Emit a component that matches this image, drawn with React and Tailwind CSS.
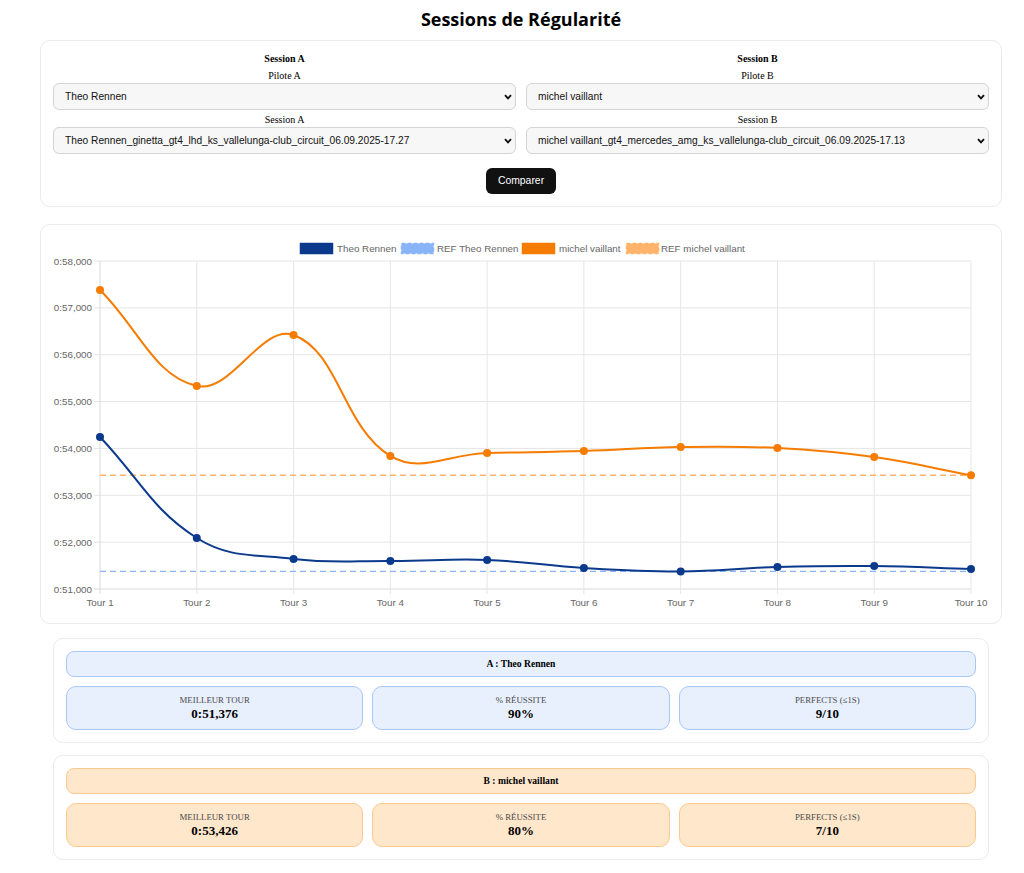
import React, { useState } from 'react'

const lapsA = [54.244, 52.089, 51.641, 51.598, 51.62, 51.449, 51.376, 51.47, 51.491, 51.427]
const lapsB = [57.381, 55.333, 56.421, 53.839, 53.903, 53.945, 54.03, 54.01, 53.817, 53.426]

// chart geometry (svg coords)
const X0 = 47
const X1 = 918
const TOP = 24
const BOTTOM = 352
const MIN = 51
const MAX = 58

const px = (i) => X0 + ((X1 - X0) / 9) * i
const py = (v) => BOTTOM - ((v - MIN) / (MAX - MIN)) * (BOTTOM - TOP)

const fmt = (s) => {
  const sec = Math.floor(s)
  const ms = Math.round((s - sec) * 1000)
  return `0:${sec},${String(ms).padStart(3, '0')}`
}

// same spline as chart.js (tension 0.4)
function splinePath(values) {
  const pts = values.map((v, i) => ({ x: px(i), y: py(v) }))
  const t = 0.4
  const cps = pts.map((cur, i) => {
    const prev = pts[i - 1] || cur
    const next = pts[i + 1] || cur
    const d01 = Math.hypot(cur.x - prev.x, cur.y - prev.y)
    const d12 = Math.hypot(next.x - cur.x, next.y - cur.y)
    let s01 = d01 / (d01 + d12)
    let s12 = d12 / (d01 + d12)
    if (isNaN(s01)) s01 = 0
    if (isNaN(s12)) s12 = 0
    const fa = t * s01
    const fb = t * s12
    return {
      prev: { x: cur.x - fa * (next.x - prev.x), y: cur.y - fa * (next.y - prev.y) },
      next: { x: cur.x + fb * (next.x - prev.x), y: cur.y + fb * (next.y - prev.y) },
    }
  })
  let d = `M${pts[0].x},${pts[0].y}`
  for (let i = 0; i < pts.length - 1; i++) {
    const a = cps[i].next
    const b = cps[i + 1].prev
    const p = pts[i + 1]
    d += ` C${a.x},${a.y} ${b.x},${b.y} ${p.x},${p.y}`
  }
  return d
}

const Chevron = () => (
  <svg
    className="pointer-events-none absolute right-[4px] top-1/2 -translate-y-1/2"
    width="8"
    height="6"
    viewBox="0 0 8 6"
  >
    <path d="M1 1.2 L4 4.4 L7 1.2" fill="none" stroke="#111" strokeWidth="1.9" />
  </svg>
)

function Select({ value, options }) {
  const [v, setV] = useState(value)
  return (
    <div className="relative mt-[1px]">
      <select
        value={v}
        onChange={(e) => setV(e.target.value)}
        className="block h-[27px] w-full appearance-none rounded-[6px] border border-[#d4d4d4] bg-[#f7f7f7] pl-[11px] pr-6 text-[10.2px] text-[#111] outline-none"
        style={{ fontFamily: '"Liberation Sans", Arial, sans-serif' }}
      >
        {options.map((o) => (
          <option key={o}>{o}</option>
        ))}
      </select>
      <Chevron />
    </div>
  )
}

function SessionColumn({ side, pilot, session }) {
  return (
    <div className="flex flex-col">
      <div className="text-center text-[10px] font-bold leading-[12px] text-black">Session {side}</div>
      <div className="mt-[5px] text-center text-[10px] leading-[12px] text-black">Pilote {side}</div>
      <Select value={pilot} options={[pilot]} />
      <div className="mt-[4px] text-center text-[10px] leading-[12px] text-black">Session {side}</div>
      <Select value={session} options={[session]} />
    </div>
  )
}

function Chart() {
  const ticks = [58, 57, 56, 55, 54, 53, 52, 51]
  const legend = [
    { x: 247, tx: 284, label: 'Theo Rennen', fill: '#0b3a8c', stroke: '#0b3a8c', dash: false },
    { x: 348, tx: 384, label: 'REF Theo Rennen', fill: '#8ab4f8', stroke: '#8ab4f8', dash: true },
    { x: 469, tx: 506, label: 'michel vaillant', fill: '#f57c00', stroke: '#f57c00', dash: false },
    { x: 573, tx: 608, label: 'REF michel vaillant', fill: '#ffb36b', stroke: '#ffb36b', dash: true },
  ]
  return (
    <svg width="936" height="374" viewBox="0 0 936 374" className="block" style={{ fontFamily: '"Liberation Sans", Arial, sans-serif' }}>
      {/* legend */}
      {legend.map((l) => (
        <g key={l.label}>
          <rect
            x={l.x + 0.5}
            y={6.5}
            width={32}
            height={10}
            fill={l.fill}
            stroke={l.stroke}
            strokeWidth="1.5"
            strokeDasharray={l.dash ? '4 2' : undefined}
          />
          <text x={l.tx} y={15} fontSize="9.8" fill="#666">
            {l.label}
          </text>
        </g>
      ))}

      {/* grid */}
      {ticks.map((v) => (
        <g key={v}>
          <line x1={X0 - 6} x2={X1} y1={py(v)} y2={py(v)} stroke={v === 51 ? '#d9d9d9' : '#e6e6e6'} strokeWidth="1" />
          <text x={39} y={py(v) + 3.5} fontSize="9.8" fill="#666" textAnchor="end">
            {fmt(v)}
          </text>
        </g>
      ))}
      {lapsA.map((_, i) => (
        <g key={i}>
          <line x1={px(i)} x2={px(i)} y1={TOP} y2={BOTTOM + 5} stroke={i === 0 ? '#d9d9d9' : '#e6e6e6'} strokeWidth="1" />
          <text x={px(i)} y={368.5} fontSize="9.8" fill="#666" textAnchor="middle">
            Tour {i + 1}
          </text>
        </g>
      ))}

      {/* reference lines */}
      <line x1={X0} x2={X1} y1={py(51.376)} y2={py(51.376)} stroke="#8ab4f8" strokeWidth="1.4" strokeDasharray="6 4" />
      <line x1={X0} x2={X1} y1={py(53.426)} y2={py(53.426)} stroke="#ffb36b" strokeWidth="1.4" strokeDasharray="6 4" />

      {/* data */}
      <path d={splinePath(lapsA)} fill="none" stroke="#0b3a8c" strokeWidth="2" />
      <path d={splinePath(lapsB)} fill="none" stroke="#f57c00" strokeWidth="2" />
      {lapsA.map((v, i) => (
        <circle key={'a' + i} cx={px(i)} cy={py(v)} r="4" fill="#0b3a8c" />
      ))}
      {lapsB.map((v, i) => (
        <circle key={'b' + i} cx={px(i)} cy={py(v)} r="4" fill="#f57c00" />
      ))}
    </svg>
  )
}

function StatsCard({ title, best, rate, perfects, tone }) {
  const box =
    tone === 'blue'
      ? 'bg-[#e8f0fe] border-[#a8c7fa]'
      : 'bg-[#fee7cb] border-[#fbc98e]'
  const stats = [
    { label: 'MEILLEUR TOUR', value: best },
    { label: '% RÉUSSITE', value: rate },
    { label: 'PERFECTS (≤1S)', value: perfects },
  ]
  return (
    <div className="rounded-[10px] border border-[#ebebeb] bg-white p-[12px]">
      <div className={`flex h-[26px] items-center justify-center rounded-[8px] border ${box}`}>
        <span className="text-[9.6px] font-bold text-black">{title}</span>
      </div>
      <div className="mt-[9px] grid grid-cols-3 gap-[9px]">
        {stats.map((s) => (
          <div key={s.label} className={`flex h-[44px] flex-col items-center justify-center rounded-[10px] border ${box}`}>
            <div className="text-[8.8px] leading-[12px] text-[#4a4a4a]">{s.label}</div>
            <div className="text-[13px] font-bold leading-[16px] text-black">{s.value}</div>
          </div>
        ))}
      </div>
    </div>
  )
}

export default function App() {
  return (
    <div className="min-h-screen bg-white" style={{ fontFamily: '"Liberation Serif", "Times New Roman", serif' }}>
      <div className="ml-[40px] w-[962px] pb-[14px]">
        {/* Title */}
        <h2
          className="pt-[7px] text-center text-[18px] font-bold leading-[25px] text-black"
          style={{ fontFamily: '"Open Sans", "Noto Sans", sans-serif' }}
        >
          Sessions de Régularité
        </h2>

        {/* Selection */}
        <div className="mt-[8px] rounded-[10px] border border-[#ebebeb] bg-white p-[12px]">
          <div className="grid grid-cols-2 gap-[10px]">
            <SessionColumn
              side="A"
              pilot="Theo Rennen"
              session="Theo Rennen_ginetta_gt4_lhd_ks_vallelunga-club_circuit_06.09.2025-17.27"
            />
            <SessionColumn
              side="B"
              pilot="michel vaillant"
              session="michel vaillant_gt4_mercedes_amg_ks_vallelunga-club_circuit_06.09.2025-17.13"
            />
          </div>
          <div className="mt-[14px] flex justify-center">
            <button
              className="h-[26px] rounded-[6px] bg-[#111] px-[12px] text-[10.4px] text-white"
              style={{ fontFamily: '"Liberation Sans", Arial, sans-serif' }}
            >
              Comparer
            </button>
          </div>
        </div>

        {/* Chart */}
        <div className="mt-[17px] rounded-[10px] border border-[#ebebeb] bg-white p-[12px]">
          <Chart />
        </div>

        {/* Stats */}
        <div className="mx-[13px] mt-[14px] flex flex-col gap-[12px]">
          <StatsCard title="A : Theo Rennen" best="0:51,376" rate="90%" perfects="9/10" tone="blue" />
          <StatsCard title="B : michel vaillant" best="0:53,426" rate="80%" perfects="7/10" tone="orange" />
        </div>
      </div>
    </div>
  )
}
